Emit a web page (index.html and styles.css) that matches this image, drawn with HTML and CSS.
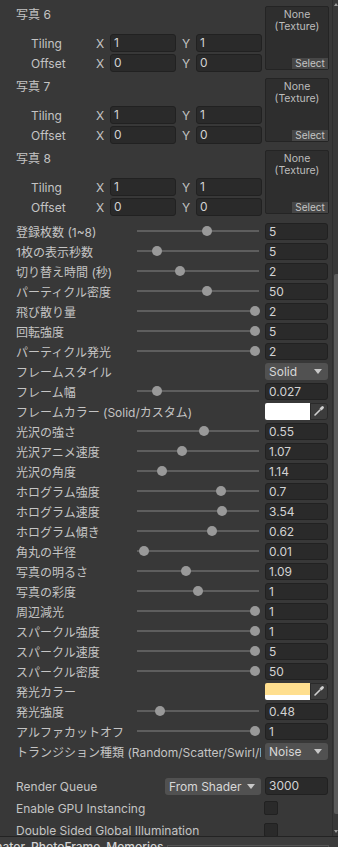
FILE: index.html
```html
<!DOCTYPE html>
<html lang="ja">
<head>
  <meta charset="UTF-8">
  <meta name="viewport" content="width=device-width, initial-scale=1.0">
  <title>Inspector</title>
  <link rel="stylesheet" href="styles.css">
</head>
<body>
  <div class="window">
    <div class="inspector">
      <div class="photos">
        <div class="photo">
          <div class="photo-main">
            <div class="photo-title">写真 6</div>
            <div class="vec-row"><span class="vec-label">Tiling</span><span class="axis">X</span><span class="field vec-field">1</span><span class="axis axis-y">Y</span><span class="field vec-field">1</span></div>
            <div class="vec-row"><span class="vec-label">Offset</span><span class="axis">X</span><span class="field vec-field">0</span><span class="axis axis-y">Y</span><span class="field vec-field">0</span></div>
          </div>
          <div class="texture"><span>None<br>(Texture)</span><span class="select">Select</span></div>
        </div>
        <div class="photo">
          <div class="photo-main">
            <div class="photo-title">写真 7</div>
            <div class="vec-row"><span class="vec-label">Tiling</span><span class="axis">X</span><span class="field vec-field">1</span><span class="axis axis-y">Y</span><span class="field vec-field">1</span></div>
            <div class="vec-row"><span class="vec-label">Offset</span><span class="axis">X</span><span class="field vec-field">0</span><span class="axis axis-y">Y</span><span class="field vec-field">0</span></div>
          </div>
          <div class="texture"><span>None<br>(Texture)</span><span class="select">Select</span></div>
        </div>
        <div class="photo">
          <div class="photo-main">
            <div class="photo-title">写真 8</div>
            <div class="vec-row"><span class="vec-label">Tiling</span><span class="axis">X</span><span class="field vec-field">1</span><span class="axis axis-y">Y</span><span class="field vec-field">1</span></div>
            <div class="vec-row"><span class="vec-label">Offset</span><span class="axis">X</span><span class="field vec-field">0</span><span class="axis axis-y">Y</span><span class="field vec-field">0</span></div>
          </div>
          <div class="texture"><span>None<br>(Texture)</span><span class="select">Select</span></div>
        </div>
      </div>

      <div class="props">
        <div class="prop"><span class="label">登録枚数 (1~8)</span><div class="slider"><span class="thumb" style="left: 65px"></span></div><span></span><span class="field">5</span></div>
        <div class="prop"><span class="label">1枚の表示秒数</span><div class="slider"><span class="thumb" style="left: 15px"></span></div><span></span><span class="field">5</span></div>
        <div class="prop"><span class="label">切り替え時間 (秒)</span><div class="slider"><span class="thumb" style="left: 38px"></span></div><span></span><span class="field">2</span></div>
        <div class="prop"><span class="label">パーティクル密度</span><div class="slider"><span class="thumb" style="left: 65px"></span></div><span></span><span class="field">50</span></div>
        <div class="prop"><span class="label">飛び散り量</span><div class="slider"><span class="thumb" style="left: 113px"></span></div><span></span><span class="field">2</span></div>
        <div class="prop"><span class="label">回転強度</span><div class="slider"><span class="thumb" style="left: 113px"></span></div><span></span><span class="field">5</span></div>
        <div class="prop"><span class="label">パーティクル発光</span><div class="slider"><span class="thumb" style="left: 113px"></span></div><span></span><span class="field">2</span></div>
        <div class="prop"><span class="label wide">フレームスタイル</span><span class="popup">Solid<i class="arrow"></i></span></div>
        <div class="prop"><span class="label">フレーム幅</span><div class="slider"><span class="thumb" style="left: 15px"></span></div><span></span><span class="field">0.027</span></div>
        <div class="prop"><span class="label wide">フレームカラー (Solid/カスタム)</span><div class="color"><span class="swatch white"></span><span class="picker"><svg width="12" height="12" viewBox="0 0 12 12"><path d="M2 10 L7 5" stroke="#d0d0d0" stroke-width="1.6" stroke-linecap="round"/><path d="M6.5 3.5 L8.5 5.5 L10.5 3.5 A1.4 1.4 0 0 0 8.5 1.5 Z" fill="#d0d0d0"/></svg></span></div></div>
        <div class="prop"><span class="label">光沢の強さ</span><div class="slider"><span class="thumb" style="left: 62px"></span></div><span></span><span class="field">0.55</span></div>
        <div class="prop"><span class="label">光沢アニメ速度</span><div class="slider"><span class="thumb" style="left: 40px"></span></div><span></span><span class="field">1.07</span></div>
        <div class="prop"><span class="label">光沢の角度</span><div class="slider"><span class="thumb" style="left: 20px"></span></div><span></span><span class="field">1.14</span></div>
        <div class="prop"><span class="label">ホログラム強度</span><div class="slider"><span class="thumb" style="left: 79px"></span></div><span></span><span class="field">0.7</span></div>
        <div class="prop"><span class="label">ホログラム速度</span><div class="slider"><span class="thumb" style="left: 80px"></span></div><span></span><span class="field">3.54</span></div>
        <div class="prop"><span class="label">ホログラム傾き</span><div class="slider"><span class="thumb" style="left: 70px"></span></div><span></span><span class="field">0.62</span></div>
        <div class="prop"><span class="label">角丸の半径</span><div class="slider"><span class="thumb" style="left: 2px"></span></div><span></span><span class="field">0.01</span></div>
        <div class="prop"><span class="label">写真の明るさ</span><div class="slider"><span class="thumb" style="left: 44px"></span></div><span></span><span class="field">1.09</span></div>
        <div class="prop"><span class="label">写真の彩度</span><div class="slider"><span class="thumb" style="left: 56px"></span></div><span></span><span class="field">1</span></div>
        <div class="prop"><span class="label">周辺減光</span><div class="slider"><span class="thumb" style="left: 113px"></span></div><span></span><span class="field">1</span></div>
        <div class="prop"><span class="label">スパークル強度</span><div class="slider"><span class="thumb" style="left: 113px"></span></div><span></span><span class="field">1</span></div>
        <div class="prop"><span class="label">スパークル速度</span><div class="slider"><span class="thumb" style="left: 113px"></span></div><span></span><span class="field">5</span></div>
        <div class="prop"><span class="label">スパークル密度</span><div class="slider"><span class="thumb" style="left: 113px"></span></div><span></span><span class="field">50</span></div>
        <div class="prop"><span class="label wide">発光カラー</span><div class="color"><span class="swatch yellow"></span><span class="picker"><svg width="12" height="12" viewBox="0 0 12 12"><path d="M2 10 L7 5" stroke="#d0d0d0" stroke-width="1.6" stroke-linecap="round"/><path d="M6.5 3.5 L8.5 5.5 L10.5 3.5 A1.4 1.4 0 0 0 8.5 1.5 Z" fill="#d0d0d0"/></svg></span></div></div>
        <div class="prop"><span class="label">発光強度</span><div class="slider"><span class="thumb" style="left: 18px"></span></div><span></span><span class="field">0.48</span></div>
        <div class="prop"><span class="label">アルファカットオフ</span><div class="slider"><span class="thumb" style="left: 113px"></span></div><span></span><span class="field">1</span></div>
        <div class="prop"><span class="label wide">トランジション種類 (Random/Scatter/Swirl/Fall/Fade)</span><span class="popup">Noise<i class="arrow"></i></span></div>
      </div>

      <div class="material">
        <div class="mat-row queue"><span class="label">Render Queue</span><span class="popup">From Shader<i class="arrow"></i></span><span class="field">3000</span></div>
        <div class="mat-row check-row"><span class="label">Enable GPU Instancing</span><span class="checkbox"></span></div>
        <div class="mat-row check-row"><span class="label">Double Sided Global Illumination</span><span class="checkbox"></span></div>
      </div>
    </div>
    <div class="scrollbar">
      <i class="scroll-up"></i>
      <div class="track"><div class="scroll-thumb"></div></div>
      <i class="scroll-down"></i>
    </div>
  </div>
  <div class="bottom">
    <span class="asset-name">Animator_PhotoFrame_Memories</span>
    <span class="asset-field"></span>
  </div>
</body>
</html>
```

FILE: styles.css
```css
body {
  margin: 0;
  width: 338px;
  height: 847px;
  overflow: hidden;
  background: #383838;
  color: #c4c4c4;
  font-family: 'Inter', 'Noto Sans CJK JP', sans-serif;
  font-size: 12px;
}
.window {
  display: flex;
  height: 836px;
}
.inspector {
  width: 332px;
  overflow: hidden;
}

/* photo blocks */
.photos {
  padding-top: 6px;
}
.photo {
  display: flex;
  height: 66px;
  margin-bottom: 6px;
}
.photo:last-child {
  margin-bottom: 0;
}
.photo-main {
  width: 265px;
}
.photo-title {
  height: 18px;
  line-height: 18px;
  padding-left: 16px;
  margin-bottom: 10px;
}
.vec-row {
  display: flex;
  align-items: center;
  height: 18px;
  padding-left: 31px;
}
.vec-row + .vec-row {
  margin-top: 2px;
}
.vec-label {
  width: 65px;
}
.axis {
  width: 14px;
}
.axis-y {
  width: 14px;
  padding-left: 6px;
}
.field {
  box-sizing: border-box;
  height: 18px;
  line-height: 16px;
  padding-left: 3px;
  background: #2a2a2a;
  border: 1px solid #212121;
  border-radius: 3px;
  color: #d2d2d2;
  white-space: nowrap;
  overflow: hidden;
}
.vec-field {
  width: 66px;
}
.texture {
  box-sizing: border-box;
  width: 64px;
  height: 64px;
  padding-top: 2px;
  display: flex;
  flex-direction: column;
  align-items: center;
  background: #2e2e2e;
  border: 1px solid #242424;
  border-radius: 2px;
  color: #bdbdbd;
  font-size: 10.5px;
  line-height: 12px;
  text-align: center;
}
.select {
  margin-top: auto;
  align-self: flex-end;
  width: 36px;
  height: 11px;
  line-height: 11px;
  background: #474747;
  color: #c4c4c4;
  font-size: 10px;
}

/* property rows */
.props {
  margin-top: 5px;
  padding-left: 16px;
}
.prop {
  display: grid;
  grid-template-columns: 121px 122px 6px 63px;
  align-items: center;
  height: 20px;
}
.prop .field {
  height: 17px;
  line-height: 15px;
}
.label {
  white-space: nowrap;
  overflow: hidden;
}
.label.wide {
  grid-column: 1 / 4;
  margin-right: 4px;
}
.slider {
  position: relative;
  height: 10px;
}
.slider::before {
  content: '';
  position: absolute;
  left: 0;
  right: 0;
  top: 4px;
  height: 2px;
  background: #5e5e5e;
}
.thumb {
  position: absolute;
  top: 0;
  width: 10px;
  height: 10px;
  border-radius: 50%;
  background: #999;
}
.popup {
  box-sizing: border-box;
  display: flex;
  align-items: center;
  justify-content: space-between;
  height: 17px;
  padding: 0 6px 0 4px;
  background: #515151;
  border-radius: 3px;
  color: #d8d8d8;
}
.arrow {
  width: 0;
  height: 0;
  border-left: 4px solid transparent;
  border-right: 4px solid transparent;
  border-top: 5px solid #c8c8c8;
}
.color {
  display: flex;
  height: 17px;
}
.swatch {
  width: 45px;
  box-sizing: border-box;
  border-radius: 2px 0 0 2px;
}
.swatch.white {
  background: #fff;
}
.swatch.yellow {
  background: linear-gradient(to bottom, #ffdf8f 0, #ffdf8f 12px, #fff 12px);
}
.picker {
  box-sizing: border-box;
  width: 18px;
  display: flex;
  align-items: center;
  justify-content: center;
  background: #3c3c3c;
  border: 1px solid #2a2a2a;
  border-radius: 0 3px 3px 0;
}

/* material settings */
.material {
  margin-top: 14px;
  padding-left: 16px;
}
.mat-row {
  display: grid;
  align-items: center;
  height: 22px;
}
.queue {
  grid-template-columns: 149px 96px 4px 63px;
}
.queue .field {
  grid-column: 4;
  height: 18px;
}
.check-row {
  grid-template-columns: 248px 14px;
}
.checkbox {
  box-sizing: border-box;
  width: 14px;
  height: 14px;
  background: #2a2a2a;
  border: 1px solid #212121;
  border-radius: 2px;
}

/* scrollbar */
.scrollbar {
  width: 6px;
  display: flex;
  flex-direction: column;
  align-items: flex-end;
  border-left: 1px solid #2e2e2e;
  box-sizing: border-box;
}
.scroll-up,
.scroll-down {
  width: 0;
  height: 0;
  margin: 3px 0;
  border-left: 2px solid transparent;
  border-right: 2px solid transparent;
}
.scroll-up {
  border-bottom: 3px solid #9a9a9a;
}
.scroll-down {
  border-top: 3px solid #9a9a9a;
}
.track {
  flex: 1;
  width: 4px;
}
.scroll-thumb {
  margin-top: 265px;
  height: 540px;
  background: #5a5a5a;
  border-radius: 2px 0 0 2px;
}

/* bottom bar */
.bottom {
  box-sizing: border-box;
  height: 11px;
  border-top: 1px solid #232323;
  background: #3c3c3c;
  display: flex;
  align-items: flex-start;
  overflow: hidden;
}
.asset-name {
  margin-left: -27px;
  margin-top: 3px;
  font-weight: 500;
  color: #d2d2d2;
  white-space: nowrap;
  line-height: 14px;
}
.asset-field {
  margin: 8px 0 0 4px;
  width: 160px;
  height: 10px;
  border: 1px solid #555;
  border-bottom: none;
}
```
